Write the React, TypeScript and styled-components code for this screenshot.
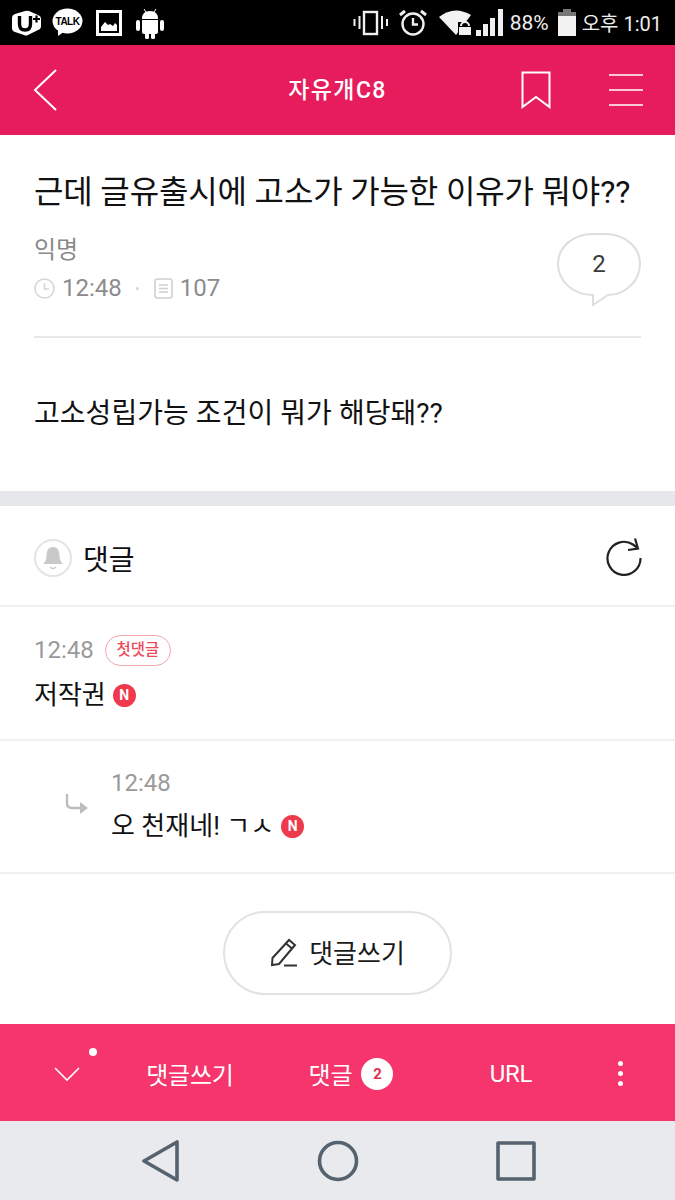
import React from "react";
import styled, { createGlobalStyle } from "styled-components";

const Global = createGlobalStyle`
  html, body { margin: 0; padding: 0; background: #fff; }
  body { font-family: Roboto, "Noto Sans CJK KR", sans-serif; }
  * { box-sizing: border-box; }
`;
const KR = `Roboto, "Noto Sans CJK KR", sans-serif`;
const Page = styled.div`
  width: 675px; height: 1200px; display: flex; flex-direction: column; overflow: hidden; background: #fff;
`;
const StatusBar = styled.div`
  height: 45px; flex: none; background: #000; display: flex; align-items: center; justify-content: space-between; padding: 0 13px 0 11px; color: #f2f2f2;
`;
const StatusGroup = styled.div<{ $gap: number }>`
  display: flex; align-items: center; gap: ${(p) => p.$gap}px;
`;
const StatusText = styled.span<{ $size?: number }>`
  font: 400 ${(p) => p.$size ?? 20}px ${KR}; color: #eee; white-space: nowrap;
`;
const Header = styled.header`
  height: 90px; flex: none; background: #e61c5d; display: flex; align-items: center; justify-content: space-between; padding: 0 32px 0 33px; position: relative;
`;
const HeaderTitle = styled.div`
  position: absolute; left: 0; right: 0; top: 32px; text-align: center; font: 500 23px/28px ${KR}; color: #fff; letter-spacing: 1.4px;
`;
const HeaderRight = styled.div`
  display: flex; align-items: center; gap: 58px;
`;
const Post = styled.section`
  height: 356px; flex: none; padding: 0 34px; display: flex; flex-direction: column;
`;
const Title = styled.h1`
  margin: 36px 0 0; font: 400 32px/42px ${KR}; color: #111; letter-spacing: -0.15px; white-space: nowrap;
`;
const MetaRow = styled.div`
  margin-top: 19px; height: 106px; border-bottom: 2px solid #e8e8e8; display: flex; justify-content: space-between;
`;
const MetaCol = styled.div`
  display: flex; flex-direction: column;
`;
const Author = styled.div`
  font: 400 24px/36px ${KR}; color: #8a8a8a;
`;
const Stats = styled.div`
  display: flex; align-items: center; font: 400 24px/38px ${KR}; color: #8c8c8c; margin-top: 1px;
`;
const Dot = styled.span`
  width: 3px; height: 3px; border-radius: 50%; background: #d4d4d4; margin: 0 15px 0 14px;
`;
const Bubble = styled.div`
  position: relative; width: 84px; height: 74px; margin-top: 1px; display: flex; align-items: center; justify-content: center; font: 400 24px ${KR}; color: #3a3a3a;
  & > svg { position: absolute; left: 0; top: 0; }
  & > span { position: relative; top: -6px; }
`;
const Body = styled.p`
  margin: 56px 0 0; font: 400 28px/40px ${KR}; color: #111; letter-spacing: 0.05px; white-space: nowrap;
`;
const Band = styled.div`
  height: 15px; flex: none; background: #e6e7ea;
`;
const CommentHead = styled.div`
  height: 101px; flex: none; border-bottom: 2px solid #f0f0f0; display: flex; align-items: center; justify-content: space-between; padding: 4px 31px 0 34px;
`;
const CommentHeadLeft = styled.div`
  display: flex; align-items: center; gap: 11px; font: 400 28px ${KR}; color: #111;
`;
const BellCircle = styled.div`
  width: 38px; height: 38px; border-radius: 50%; border: 2px solid #e4e4e4; display: flex; align-items: center; justify-content: center;
`;
const Comment = styled.div<{ $reply?: boolean }>`
  height: ${(p) => (p.$reply ? 133 : 134)}px; flex: none; border-bottom: 2px solid #f0f0f0; padding: ${(p) => (p.$reply ? "25px 0 0 111px" : "26px 0 0 34px")}; position: relative;
`;
const ReplyArrow = styled.svg`
  position: absolute; left: 65px; top: 52px;
`;
const CommentMeta = styled.div`
  display: flex; align-items: center; gap: 11px; font: 400 24px/34px ${KR}; color: #9a9a9a;
`;
const FirstBadge = styled.span`
  height: 31px; width: 66px; border: 1.5px solid #f3a6ae; border-radius: 16px; color: #ee4a5a; font: 500 15.5px/28px ${KR}; text-align: center;
`;
const CommentText = styled.div<{ $reply?: boolean }>`
  display: flex; align-items: center; gap: 7px; margin-top: ${(p) => (p.$reply ? 8 : 10)}px; font: 400 26px/36px ${KR}; color: #111;
`;
const NBadge = styled.span`
  width: 23px; height: 23px; border-radius: 50%; background: #ee3a4c; color: #fff; font: 700 14px/23px ${KR}; text-align: center;
`;
const WriteArea = styled.div`
  flex: 1; display: flex; justify-content: center; padding-top: 37px;
`;
const WriteButton = styled.button`
  width: 229px; height: 84px; border: 2px solid #e2e2e2; border-radius: 42px; background: #fff; display: flex; align-items: center; justify-content: center; gap: 11px; font: 400 26px ${KR}; color: #1a1a1a; padding: 0 0 3px;
`;
const BottomBar = styled.div`
  height: 97px; flex: none; background: #f5356b; position: relative; color: #fff; font: 400 24px ${KR};
`;
const BarInner = styled.div`
  height: 100%; display: grid; grid-template-columns: 134px 112px 210px 110px 108px; align-items: center; text-align: center; padding-top: 2px;
`;
const BarItem = styled.div`
  display: flex; align-items: center; justify-content: center; gap: 9px; position: relative; letter-spacing: -0.2px;
`;
const CountBadge = styled.span`
  width: 32px; height: 32px; border-radius: 50%; background: #fff; color: #e0304f; font: 700 15px/32px ${KR}; text-align: center;
`;
const Ping = styled.span`
  position: absolute; left: 89px; top: 50%; margin-top: -26px; width: 8px; height: 8px; border-radius: 50%; background: #fff;
`;
const Kebab = styled.div`
  display: flex; flex-direction: column; gap: 5px; align-items: center;
  & > i { width: 5px; height: 5px; border-radius: 50%; background: #fff; display: block; }
`;
const NavBar = styled.nav`
  height: 79px; flex: none; background: #e8eaed; display: flex; align-items: center; gap: 136px; padding-left: 141px;
`;

export default function App() {
  return (
    <Page>
      <Global />
      <StatusBar>
        <StatusGroup $gap={11}>
          <svg width="30" height="26" viewBox="0 0 30 26">
            <path d="M1 8 Q1 5 4 4 L14 1 Q16 0.5 18 1 L27 5 Q30 6 30 9 V16 Q30 19 27 20 L17 25 Q15 26 13 25 L4 22 Q1 21 1 18 Z" fill="#fff" />
            <path d="M8.5 6 V14 Q8.5 20 14 20 Q19.5 20 19.5 14 V6" fill="none" stroke="#000" strokeWidth="3.4" />
            <path d="M22 9 H29 M25.5 5.5 V12.5" stroke="#000" strokeWidth="2.2" />
          </svg>
          <svg width="31" height="30" viewBox="0 0 31 30">
            <ellipse cx="15.5" cy="13" rx="15" ry="12.5" fill="#fff" />
            <path d="M6 21 L6 28 L13 23 Z" fill="#fff" />
            <text x="15.5" y="17" textAnchor="middle" fontFamily="Liberation Sans" fontWeight="700" fontSize="10" letterSpacing="-.5" fill="#000">TALK</text>
          </svg>
          <svg width="26" height="26" viewBox="0 0 26 26" style={{ marginLeft: 2 }}>
            <rect x="1.5" y="1.5" width="23" height="23" fill="none" stroke="#fff" strokeWidth="3" />
            <path d="M5 21 V17 L9 12 L12 15 L14 14 L17 16 L19 13 L21 15 V21 Z" fill="#fff" />
          </svg>
          <svg width="28" height="32" viewBox="0 0 28 32" style={{ marginLeft: 3 }}>
            <path d="M8 2 L10 5 M20 2 L18 5" stroke="#fff" strokeWidth="1" />
            <path d="M6 12 Q6 4 14 4 Q22 4 22 12 Z" fill="#fff" />
            <path d="M6 13 H22 V25 Q22 27 20 27 H8 Q6 27 6 25 Z" fill="#fff" />
            <rect x="0" y="13" width="4" height="11" rx="2" fill="#fff" />
            <rect x="24" y="13" width="4" height="11" rx="2" fill="#fff" />
            <rect x="9" y="26" width="4" height="6" rx="1.5" fill="#fff" />
            <rect x="15" y="26" width="4" height="6" rx="1.5" fill="#fff" />
          </svg>
        </StatusGroup>
        <StatusGroup $gap={6}>
          <svg width="36" height="28" viewBox="0 0 36 28" fill="none" stroke="#f0f0f0">
            <rect x="11" y="3" width="13" height="22" strokeWidth="2.4" />
            <path d="M6.5 7 V20 M29 7 V20" strokeWidth="2" />
            <path d="M1.5 10 V17 M34 10 V17" strokeWidth="2" />
          </svg>
          <svg width="30" height="30" viewBox="0 0 30 30" fill="none" stroke="#f0f0f0" strokeWidth="2.4" style={{ marginLeft: 3 }}>
            <circle cx="15" cy="16" r="10.5" />
            <path d="M15 10 V16.5 H20" />
            <path d="M2 7 L7 3 M28 7 L23 3" strokeWidth="3" />
          </svg>
          <svg width="34" height="28" viewBox="0 0 34 28" style={{ marginLeft: 5 }}>
            <path d="M0 8 Q15 -4 32 6 L17 26 Z" fill="#f2f2f2" />
            <rect x="19" y="13" width="15" height="14" fill="#000" />
            <path d="M22 17 a4 4 0 0 1 8 0" fill="none" stroke="#f2f2f2" strokeWidth="2" />
            <rect x="20" y="18" width="12" height="8" fill="#f2f2f2" />
          </svg>
          <svg width="28" height="27" viewBox="0 0 28 27" fill="#f0f0f0" style={{ marginLeft: -3 }}>
            <rect x="0" y="21" width="5" height="6" />
            <rect x="7" y="15" width="5" height="12" />
            <rect x="14" y="9" width="5" height="18" />
            <rect x="22" y="0" width="5" height="27" />
          </svg>
          <StatusText $size={21} style={{ marginRight: 3 }}>88%</StatusText>
          <svg width="18" height="27" viewBox="0 0 18 27">
            <rect x="5" y="0" width="8" height="3" fill="#777" />
            <rect x="0" y="3" width="18" height="5" fill="#777" />
            <rect x="0" y="7" width="18" height="20" fill="#f2f2f2" />
          </svg>
          <StatusText>오후 1:01</StatusText>
        </StatusGroup>
      </StatusBar>

      <Header>
        <svg width="24" height="42" viewBox="0 0 24 42" fill="none" stroke="#fff" strokeWidth="2">
          <path d="M23 1 L2 21 L23 41" />
        </svg>
        <HeaderTitle>자유개C8</HeaderTitle>
        <HeaderRight>
          <svg width="30" height="38" viewBox="0 0 30 38" fill="none" stroke="#fff" strokeWidth="2">
            <path d="M1.5 1.5 H28.5 V36 L15 26 L1.5 36 Z" />
          </svg>
          <svg width="34" height="32" viewBox="0 0 34 32" stroke="#fff" strokeWidth="1.7">
            <path d="M0 1 H34 M0 16 H34 M0 31 H34" />
          </svg>
        </HeaderRight>
      </Header>

      <Post>
        <Title>근데 글유출시에 고소가 가능한 이유가 뭐야??</Title>
        <MetaRow>
          <MetaCol>
            <Author>익명</Author>
            <Stats>
              <svg width="21" height="21" viewBox="0 0 21 21" fill="none" stroke="#d6d6d6" strokeWidth="1.6" style={{ marginRight: 7 }}>
                <circle cx="10.5" cy="10.5" r="9.5" />
                <path d="M10.5 5 V11 H15" />
              </svg>
              12:48
              <Dot />
              <svg width="19" height="21" viewBox="0 0 19 21" fill="none" stroke="#d0d0d0" strokeWidth="1.6" style={{ marginRight: 7 }}>
                <rect x="1" y="1" width="17" height="19" rx="2.5" />
                <path d="M5 7 H14 M5 10.5 H14 M5 14 H14" />
              </svg>
              107
            </Stats>
          </MetaCol>
          <Bubble>
            <svg width="84" height="74" viewBox="0 0 84 74" fill="none" stroke="#dedede" strokeWidth="2">
              <path d="M36 1 H48 C68 1 83 14 83 31 C83 48 68 62 51 62 L36 72 V62 C16 62 1 48 1 31 C1 14 16 1 36 1 Z" />
            </svg>
            <span>2</span>
          </Bubble>
        </MetaRow>
        <Body>고소성립가능 조건이 뭐가 해당돼??</Body>
      </Post>
      <Band />

      <CommentHead>
        <CommentHeadLeft>
          <BellCircle>
            <svg width="22" height="26" viewBox="0 0 22 26" fill="#c9c9c9">
              <path d="M11 2 C6 2 4.5 6 4.5 11 C4.5 15 3 17 1 19 H21 C19 17 17.5 15 17.5 11 C17.5 6 16 2 11 2 Z" />
              <path d="M8 22 Q11 25 14 22" fill="none" stroke="#c9c9c9" strokeWidth="1.4" />
            </svg>
          </BellCircle>
          댓글
        </CommentHeadLeft>
        <svg width="38" height="40" viewBox="0 0 38 40" fill="none" stroke="#222" strokeWidth="2.2" style={{ marginTop: -2 }}>
          <path d="M34.5 21 A16.5 16.5 0 1 1 27 7.5 Q29 9 31 10.5" />
          <path d="M29 1.5 L32 11.5 L22 13" />
        </svg>
      </CommentHead>

      <Comment>
        <CommentMeta>
          12:48
          <FirstBadge>첫댓글</FirstBadge>
        </CommentMeta>
        <CommentText>
          저작권
          <NBadge>N</NBadge>
        </CommentText>
      </Comment>
      <Comment $reply>
        <ReplyArrow width="24" height="24" viewBox="0 0 24 24" fill="none" stroke="#bdbdbd" strokeWidth="2.4">
          <path d="M2 1 V10 Q2 15 7 15 H18" />
          <path d="M15 9 L23 15 L15 21 Z" fill="#bdbdbd" stroke="none" />
        </ReplyArrow>
        <CommentMeta>12:48</CommentMeta>
        <CommentText $reply>
          오 천재네! ㄱㅅ
          <NBadge>N</NBadge>
        </CommentText>
      </Comment>

      <WriteArea>
        <WriteButton>
          <svg width="28" height="30" viewBox="0 0 28 30" fill="none" stroke="#333" strokeWidth="2">
            <path d="M2 28 L2.5 21 L19 3 L25 8 L9 27 Z" />
            <path d="M16 6.5 L22 11.5" />
            <path d="M14 28.5 H27" />
          </svg>
          댓글쓰기
        </WriteButton>
      </WriteArea>

      <BottomBar>
        <BarInner>
          <BarItem>
            <svg width="26" height="16" viewBox="0 0 26 16" fill="none" stroke="#fff" strokeWidth="1.6">
              <path d="M1 2 L13 14 L25 2" />
            </svg>
            <Ping />
          </BarItem>
          <BarItem>댓글쓰기</BarItem>
          <BarItem>
            댓글
            <CountBadge>2</CountBadge>
          </BarItem>
          <BarItem>URL</BarItem>
          <BarItem>
            <Kebab>
              <i />
              <i />
              <i />
            </Kebab>
          </BarItem>
        </BarInner>
      </BottomBar>
      <NavBar>
        <svg width="40" height="42" viewBox="0 0 40 42" fill="none" stroke="#56636e" strokeWidth="3.6" strokeLinejoin="round">
          <path d="M36 2 V40 L3 21 Z" />
        </svg>
        <svg width="42" height="42" viewBox="0 0 42 42" fill="none" stroke="#56636e" strokeWidth="3.6">
          <circle cx="21" cy="21" r="18.5" />
        </svg>
        <svg width="42" height="42" viewBox="0 0 42 42" fill="none" stroke="#56636e" strokeWidth="3.6" strokeLinejoin="round">
          <rect x="3" y="3" width="36" height="36" />
        </svg>
      </NavBar>
    </Page>
  );
}
